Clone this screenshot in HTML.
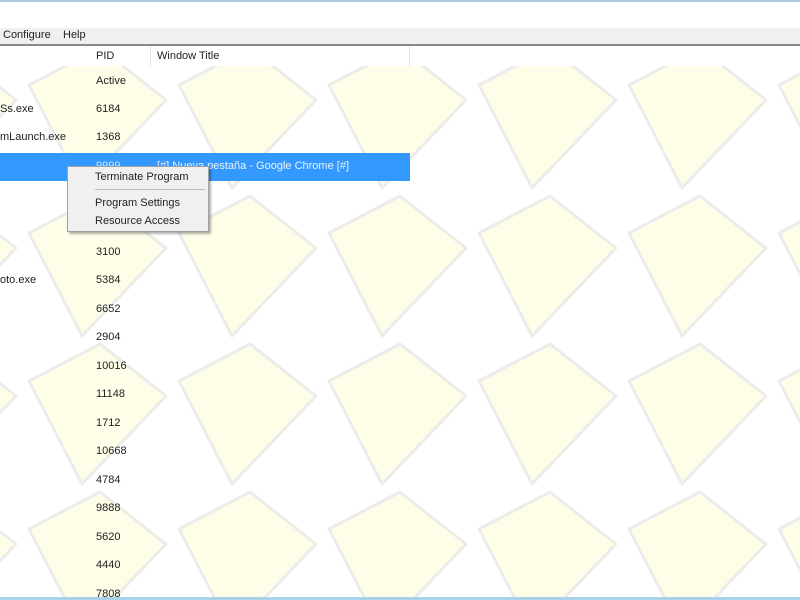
<!DOCTYPE html>
<html><head><meta charset="utf-8"><style>
body{margin:0;width:800px;height:600px;overflow:hidden;background:#fff;font-family:"Liberation Sans",sans-serif;font-size:11px;color:#222;position:relative}
.a{position:absolute}
</style></head><body>
<div class="a" style="left:0;top:0;width:800px;height:2px;background:#a9cbe3"></div>
<div class="a" style="left:0;top:28px;width:800px;height:16px;background:#f0f0f0"></div>
<div class="a" style="left:0;top:44px;width:800px;height:2px;background:#8a8a8a"></div>
<div class="a" style="left:3px;top:29px">Configure</div>
<div class="a" style="left:63px;top:29px">Help</div>
<svg class="a" style="left:0;top:66px" width="800" height="534">
<defs><pattern id="p" patternUnits="userSpaceOnUse" x="25" y="-22" width="150" height="148">
<polygon points="75,4 141,56 57,144 4,41" fill="#fdfde8" stroke="#ececea" stroke-width="3" stroke-linejoin="round"/>
</pattern></defs>
<rect width="800" height="534" fill="url(#p)"/>
</svg>
<div class="a" style="left:150px;top:46px;width:1px;height:20px;background:#e5e5e5"></div>
<div class="a" style="left:409px;top:46px;width:1px;height:20px;background:#e5e5e5"></div>
<div class="a" style="left:96px;top:50px">PID</div>
<div class="a" style="left:157px;top:50px">Window Title</div>
<div class="a" style="left:0;top:153px;width:410px;height:28px;background:#3399ff"></div>
<div class="a" style="left:96px;top:160px;color:#cfe6ff">9999</div>
<div class="a" style="left:157px;top:160px;color:#e8f3ff">[#] Nueva pestaña - Google Chrome [#]</div>
<div class="a" style="left:96px;top:75px">Active</div>
<div class="a" style="left:0;top:103px">Ss.exe</div>
<div class="a" style="left:0;top:131px">mLaunch.exe</div>
<div class="a" style="left:0;top:274px">oto.exe</div>
<div class="a" style="left:96px;top:103px">6184</div>
<div class="a" style="left:96px;top:131px">1368</div>
<div class="a" style="left:96px;top:246px">3100</div>
<div class="a" style="left:96px;top:274px">5384</div>
<div class="a" style="left:96px;top:303px">6652</div>
<div class="a" style="left:96px;top:331px">2904</div>
<div class="a" style="left:96px;top:360px">10016</div>
<div class="a" style="left:96px;top:388px">11148</div>
<div class="a" style="left:96px;top:417px">1712</div>
<div class="a" style="left:96px;top:445px">10668</div>
<div class="a" style="left:96px;top:474px">4784</div>
<div class="a" style="left:96px;top:502px">9888</div>
<div class="a" style="left:96px;top:531px">5620</div>
<div class="a" style="left:96px;top:559px">4440</div>
<div class="a" style="left:96px;top:588px">7808</div>
<div class="a" style="left:0;top:597px;width:800px;height:3px;background:#a9d3e8"></div>
<div class="a" style="left:67px;top:166px;width:140px;height:64px;background:#f0f0f0;border:1px solid #a0a0a0;box-shadow:2px 2px 2px rgba(0,0,0,.3)">
<div class="a" style="left:27px;top:4px">Terminate Program</div>
<div class="a" style="left:27px;top:22px;width:110px;height:1px;background:#bdbdbd"></div>
<div class="a" style="left:27px;top:30px">Program Settings</div>
<div class="a" style="left:27px;top:48px">Resource Access</div>
</div>
</body></html>
